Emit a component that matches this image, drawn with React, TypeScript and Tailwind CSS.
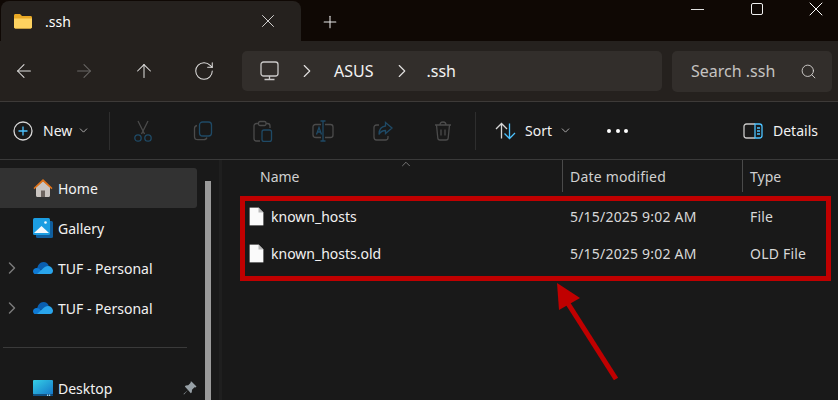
import { ArrowLeft, ArrowRight, ArrowUp, ChevronDown, ChevronRight, ChevronUp, Minus, Plus, RotateCw, Search, X } from 'lucide-react';

const FolderIcon = () => (
    <svg width="20" height="16" viewBox="0 0 20 16">
        <path d="M1 2.500C1 1.700 1.600 1 2.400 1H7l2 2h8.600c.8 0 1.400.6 1.400 1.400V14c0 .8-.6 1.400-1.400 1.400H2.400C1.600 15.400 1 14.800 1 14z" fill="#e8a825" />
        <path d="M1 5.500h18V14c0 .8-.6 1.400-1.400 1.400H2.400C1.600 15.400 1 14.800 1 14z" fill="#fdd260" />
    </svg>
)

const MonitorIcon = () => (
    <svg width="20" height="20" viewBox="0 0 20 20" fill="none" stroke="#c9c8c7" strokeWidth="1.300">
        <rect x="1" y="1" width="17" height="14" rx="2.500" />
        <path d="M9.500 15v3M4.500 18.500h10" />
    </svg>
)

const ScissorsIcon = () => (
    <svg width="20" height="22" viewBox="0 0 20 22" fill="none" strokeWidth="1.300">
        <path d="M5 1l6.500 13M15 1L8.500 14" stroke="#4b4b4b" />
        <circle cx="5" cy="18" r="3.200" stroke="#1f4a66" />
        <circle cx="15" cy="18" r="3.200" stroke="#1f4a66" />
    </svg>
)

const CopyIcon = () => (
    <svg width="20" height="20" viewBox="0 0 20 20" fill="none" strokeWidth="1.300">
        <path d="M4 4.500C2.500 4.800 1.500 5.800 1.500 7.500v8c0 2 1.200 3.200 3.200 3.200h6c1.700 0 2.800-.8 3.200-2.200" stroke="#4b4b4b" />
        <rect x="6.500" y="1" width="12" height="14" rx="3" stroke="#1f4a66" />
    </svg>
)

const PasteIcon = () => (
    <svg width="20" height="22" viewBox="0 0 20 22" fill="none" strokeWidth="1.300">
        <path d="M5 3.500H3.500C2 3.500 1 4.500 1 6v12.500C1 20 2 21 3.500 21H7M13 3.500h1.500C16 3.500 17 4.500 17 6v2" stroke="#4b4b4b" />
        <rect x="5.500" y="1.500" width="7.500" height="4" rx="1.500" stroke="#4b4b4b" />
        <rect x="9" y="10" width="9.500" height="11.500" rx="2" stroke="#1f4a66" />
    </svg>
)

const RenameIcon = () => (
    <svg width="22" height="22" viewBox="0 0 22 22" fill="none" strokeWidth="1.300">
        <path d="M9 4.500H3.500C2 4.500 1 5.500 1 7v8c0 1.500 1 2.500 3 2.500h5M13 4.500h5.500C20 4.500 21 5.500 21 7v8c0 1.500-1 2.500-2.500 2.500H13" stroke="#4b4b4b" />
        <path d="M8.500 1h5M11 1v20M8.500 21h5" stroke="#1f4a66" />
        <path d="M4.500 14.500l2.500-7 2.500 7M5.400 12h3.200" stroke="#1f4a66" />
    </svg>
)

const ShareIcon = () => (
    <svg width="20" height="20" viewBox="0 0 20 20" fill="none" strokeWidth="1.300">
        <path d="M6 4H3.500C2 4 1 5 1 6.500v9.500C1 17.800 2 19 3.500 19h9c1.500 0 2.500-1 2.500-2.500V15" stroke="#4b4b4b" />
        <path d="M12.500 1.500l6.500 5.500-6.500 5.500V9.500c-3 0-5 1-6.500 4 0-5 2.500-8 6.500-8.500z" stroke="#1f4a66" />
    </svg>
)

const TrashIcon = () => (
    <svg width="18" height="20" viewBox="0 0 18 20" fill="none" stroke="#4b4b4b" strokeWidth="1.300">
        <path d="M1 4h16M6 4c0-2 1-3 3-3s3 1 3 3M2.500 4l1.300 13c.1 1.200 1 2 2.200 2h6c1.200 0 2.100-.8 2.200-2L15.500 4M7 8.500v6M11 8.500v6" />
    </svg>
)

const SortIcon = () => (
    <svg width="22" height="18" viewBox="0 0 22 18" fill="none" strokeWidth="1.300">
        <path d="M6.500 16.500V1.500M1 7l5.500-5.500L12 7" stroke="#d6d6d6" />
        <path d="M14.500 1.500v15M9.500 11.500l5 5 5.500-5.500" stroke="#4cc2ff" />
    </svg>
)

const DetailsIcon = () => (
    <svg width="20" height="16" viewBox="0 0 20 16" fill="none" strokeWidth="1.300">
        <path d="M12 1H3.500C2 1 1 2 1 3.500v9C1 14 2 15 3.500 15H12" stroke="#c9c8c7" />
        <path d="M12 1h4.500C18 1 19 2 19 3.500v9c0 1.500-1 2.500-2.500 2.500H12z" stroke="#4cc2ff" />
        <path d="M14 5h3M14 8h3M14 11h3" stroke="#4cc2ff" />
    </svg>
)

const HomeIcon = () => (
    <svg width="20" height="20" viewBox="0 0 20 20">
        <path d="M3 9l7-6 7 6v8.500c0 .8-.6 1.500-1.400 1.500H4.400C3.600 19 3 18.300 3 17.500z" fill="#c9c4c0" />
        <path d="M8 19v-6.500h4V19z" fill="#6d6560" />
        <path d="M.5 10L10 1l9.500 9-1 1.200L10 3.500 1.500 11.200z" fill="#e0731a" />
    </svg>
)

const GalleryIcon = () => (
    <svg width="20" height="20" viewBox="0 0 20 20">
        <rect x="3" y="3" width="17" height="17" rx="1.500" fill="#0f5e9e" />
        <rect x="0" y="0" width="17" height="17" rx="1.500" fill="#1b9de2" />
        <path d="M1 15l7.500-7 7.500 7z" fill="#f3f9fd" />
        <circle cx="12.500" cy="4.500" r="1.300" fill="#f3f9fd" />
    </svg>
)

const CloudIcon = () => (
    <svg width="20" height="14" viewBox="0 0 20 14">
        <path d="M4 8.500c.3-4 3-7.500 6.500-7.500 2.500 0 4.500 1.500 5.300 4L10 9z" fill="#0a5fb0" />
        <path d="M1.500 13C.5 12.400 0 11.400 0 10.300 0 8.500 1.500 7 3.500 7c1 0 2 .3 3 1l6 5z" fill="#0f7ad4" />
        <path d="M4 13l6-5.500c1.500-1.500 3-2.500 5-2.500 2.500 0 4.500 2 5 4.500 0 2-1 3.500-3 3.500z" fill="#2aa5ec" />
    </svg>
)

const DesktopIcon = () => (
    <svg width="20" height="16" viewBox="0 0 20 16">
        <defs>
            <linearGradient id="desktop-fill" x1="0" y1="0" x2="1" y2="1">
                <stop offset="0" stopColor="#35cfe6" />
                <stop offset="1" stopColor="#1477c9" />
            </linearGradient>
        </defs>
        <rect width="20" height="14.500" rx="1" fill="url(#desktop-fill)" />
        <rect x="0" y="14.500" width="20" height="1.500" fill="#0d4f86" />
        <rect x="14" y="14.500" width="1.200" height="1.500" fill="#9fd6ee" />
        <rect x="16" y="14.500" width="1.200" height="1.500" fill="#9fd6ee" />
    </svg>
)

const PinIcon = () => (
    <svg width="14" height="14" viewBox="0 0 14 14">
        <path d="M8.500.5l5 5-1 1-1-.2-2.500 2.500-.2 2.400-1 1L5 9l-4 4.500-.5-.5L5 9 1.800 5.400l1-1 2.400-.2 2.500-2.500-.2-1z" fill="#97a0a6" />
    </svg>
)

const FileIcon = () => (
    <svg width="15" height="19" viewBox="0 0 15 19">
        <path d="M.5 1.200C.5.800.8.500 1.200.500H9.500L14.500 5.500V17.800c0 .4-.3.700-.7.700H1.200c-.4 0-.7-.3-.7-.7z" fill="#fafafa" stroke="#5a5a5a" strokeWidth=".6" />
        <path d="M9.500.500v5h5z" fill="#b8b8b8" />
    </svg>
)

const navItems = [
    { icon: ArrowLeft, color: 'text-[#e2e1e0]' },
    { icon: ArrowRight, color: 'text-[#6b6967]' },
    { icon: ArrowUp, color: 'text-[#e2e1e0]' },
    { icon: RotateCw, color: 'text-[#e2e1e0]' },
]

const actionIcons = [
    <ScissorsIcon />,
    <CopyIcon />,
    <PasteIcon />,
    <RenameIcon />,
    <ShareIcon />,
    <TrashIcon />,
]

const sideItems = [
    { icon: <GalleryIcon />, label: 'Gallery', chevron: false },
    { icon: <CloudIcon />, label: 'TUF - Personal', chevron: true },
    { icon: <CloudIcon />, label: 'TUF - Personal', chevron: true },
]

const files = [
    { name: 'known_hosts', date: '5/15/2025 9:02 AM', type: 'File' },
    { name: 'known_hosts.old', date: '5/15/2025 9:02 AM', type: 'OLD File' },
]

const App = () => {
    return (
        <div className="relative w-[838px] h-[400px] overflow-hidden bg-[#191919] text-[14px] text-[#f2f2f2] font-['Noto_Sans',sans-serif]">

            {/* title bar */}
            <div className="flex h-[41px] bg-[#0f0804]">
                <div className="flex items-center w-[300px] h-[40px] mt-px ml-px pl-3 pr-[22px] rounded-t-lg bg-[#25211e]">
                    <FolderIcon />
                    <span className="ml-[12px] flex-1 text-[14px] text-white">.ssh</span>
                    <X size={22} strokeWidth={1} className="text-[#e2e1e0]" />
                </div>
                <div className="flex items-center pl-[19px] h-[44px]">
                    <Plus size={20} strokeWidth={1.25} className="text-[#e8e8e8]" />
                </div>
                <div className="flex ml-auto mr-[-7px] h-[18px]">
                    <div className="flex items-center justify-center w-[59px]"><Minus size={21} strokeWidth={1} className="text-white" /></div>
                    <div className="flex items-center justify-center w-[59px]"><div className="size-[12px] rounded-[2px] border border-[#f0f0f0]" /></div>
                    <div className="flex items-center justify-center w-[59px]"><X size={24} strokeWidth={1} className="text-white" /></div>
                </div>
            </div>

            {/* nav bar */}
            <div className="flex items-center h-[60px] bg-[#25211e] border-b border-[#3d3a38] box-content">
                {navItems.map((item, i) => {
                    const Icon = item.icon
                    return (
                        <div key={i} className={`flex justify-center w-[60px] first:ml-[-6px] ${item.color}`}>
                            <Icon size={22} strokeWidth={1.1} />
                        </div>
                    )
                })}
                <div className="flex items-center w-[420px] h-10 ml-[8px] rounded-[5px] bg-[#322e2b] text-[16px]">
                    <div className="ml-[18px]"><MonitorIcon /></div>
                    <ChevronRight size={22} strokeWidth={1.25} className="ml-[16px] text-[#e2e1e0]" />
                    <span className="ml-[16px]">ASUS</span>
                    <ChevronRight size={22} strokeWidth={1.25} className="ml-[17px] text-[#e2e1e0]" />
                    <span className="ml-[14px]">.ssh</span>
                </div>
                <div className="flex items-center justify-between w-[160px] h-[41px] ml-[10px] pl-[19px] pr-[15px] rounded-[5px] bg-[#322e2b] text-[#c5c3c1] text-[16px]">
                    <span>Search .ssh</span>
                    <Search size={17} strokeWidth={1.25} className="text-[#d8d6d4]" />
                </div>
            </div>

            {/* toolbar */}
            <div className="flex items-center h-[57px] bg-[#191919] border-b border-[#3a3a3a] box-content">
                <div className="flex items-center ml-[13px] w-[96px]">
                    <svg width="20" height="20" viewBox="0 0 20 20" fill="none" strokeWidth="1.300">
                        <circle cx="10" cy="10" r="9" stroke="#d6d6d6" />
                        <path d="M10 5.500v9M5.500 10h9" stroke="#4cc2ff" />
                    </svg>
                    <span className="ml-[10px]">New</span>
                    <ChevronDown size={13} strokeWidth={1.5} className="ml-[5px] text-[#c9c8c7]" />
                </div>
                <div className="w-px h-[38px] bg-[#2e2e2e]" />
                <div className="flex items-center ml-[3px]">
                    {actionIcons.map((icon, i) => (
                        <div key={i} className="flex justify-center w-[60px]">{icon}</div>
                    ))}
                </div>
                <div className="w-px h-[38px] ml-[2px] bg-[#2e2e2e]" />
                <div className="flex items-center ml-[19px]">
                    <SortIcon />
                    <span className="ml-[8px]">Sort</span>
                    <ChevronDown size={13} strokeWidth={1.5} className="ml-[7px] text-[#c9c8c7]" />
                </div>
                <div className="flex gap-[4.5px] ml-[35px]">
                    <span className="size-[4px] rounded-full bg-white" />
                    <span className="size-[4px] rounded-full bg-white" />
                    <span className="size-[4px] rounded-full bg-white" />
                </div>
                <div className="flex items-center ml-[115px]">
                    <DetailsIcon />
                    <span className="ml-[10px]">Details</span>
                </div>
            </div>

            {/* body */}
            <div className="flex h-[240px]">
                <div className="relative w-[219px] pt-[8px] border-r-[3px] border-[#1f1f1f] box-content">
                    <div className="flex items-center w-[197px] h-10 pl-[33px] rounded-r-[3px] bg-[#323232]">
                        <HomeIcon />
                        <span className="ml-[5px]">Home</span>
                    </div>
                    {sideItems.map((item, i) => (
                        <div key={i} className="relative flex items-center w-[197px] h-10 pl-[33px]">
                            {item.chevron && <ChevronRight size={20} strokeWidth={1.75} className="absolute left-[2px] text-[#7a7a7a]" />}
                            <div className="flex justify-center w-[20px]">{item.icon}</div>
                            <span className="ml-[5px]">{item.label}</span>
                        </div>
                    ))}
                    <div className="w-[184px] h-px ml-[3px] mt-[19px] mb-[20px] bg-[#3a3a3a]" />
                    <div className="flex items-center w-[197px] h-10 pl-[33px]">
                        <DesktopIcon />
                        <span className="ml-[5px] flex-1">Desktop</span>
                        <PinIcon />
                    </div>
                    {/* scrollbar */}
                    <div className="absolute left-[205px] top-[21px] bottom-0 w-[6px] bg-[#9a9a9a]" />
                </div>

                <div className="relative flex-1">
                    <ChevronUp size={14} strokeWidth={1} className="absolute left-[177px] top-[-3px] text-[#b5b5b5]" />
                    <div className="flex h-8 text-[#d0d0d0]">
                        <div className="flex items-center w-[341px] pl-[38px] border-r border-[#4a4a4a]">Name</div>
                        <div className="flex items-center w-[180px] pl-[7px] border-r border-[#4a4a4a] tracking-[0.2px]">Date modified</div>
                        <div className="flex items-center pl-[7px]">Type</div>
                    </div>
                    <div className="mt-[6px]">
                        {files.map(file => (
                            <div key={file.name} className="flex items-center h-[37px] text-[#d8d8d8]">
                                <div className="flex items-center w-[340px] pl-[27px] text-[#f2f2f2]">
                                    <FileIcon />
                                    <span className="ml-[7px]">{file.name}</span>
                                </div>
                                <div className="w-[180px] pl-[8px] tracking-[0.2px]">{file.date}</div>
                                <div className="pl-[8px] tracking-[0.2px]">{file.type}</div>
                            </div>
                        ))}
                    </div>
                </div>
            </div>

            {/* red annotation */}
            <div className="absolute left-[240px] top-[196px] w-[591px] h-[85px] border-[5px] border-[#c00000]" />
            <svg className="absolute left-[550px] top-[280px]" width="75" height="105" viewBox="0 0 75 105">
                <path d="M7 3L9 30 30 18z" fill="#c00000" />
                <path d="M17 22L66 99" stroke="#c00000" strokeWidth="5" />
            </svg>
        </div>
    )
}

export default App
